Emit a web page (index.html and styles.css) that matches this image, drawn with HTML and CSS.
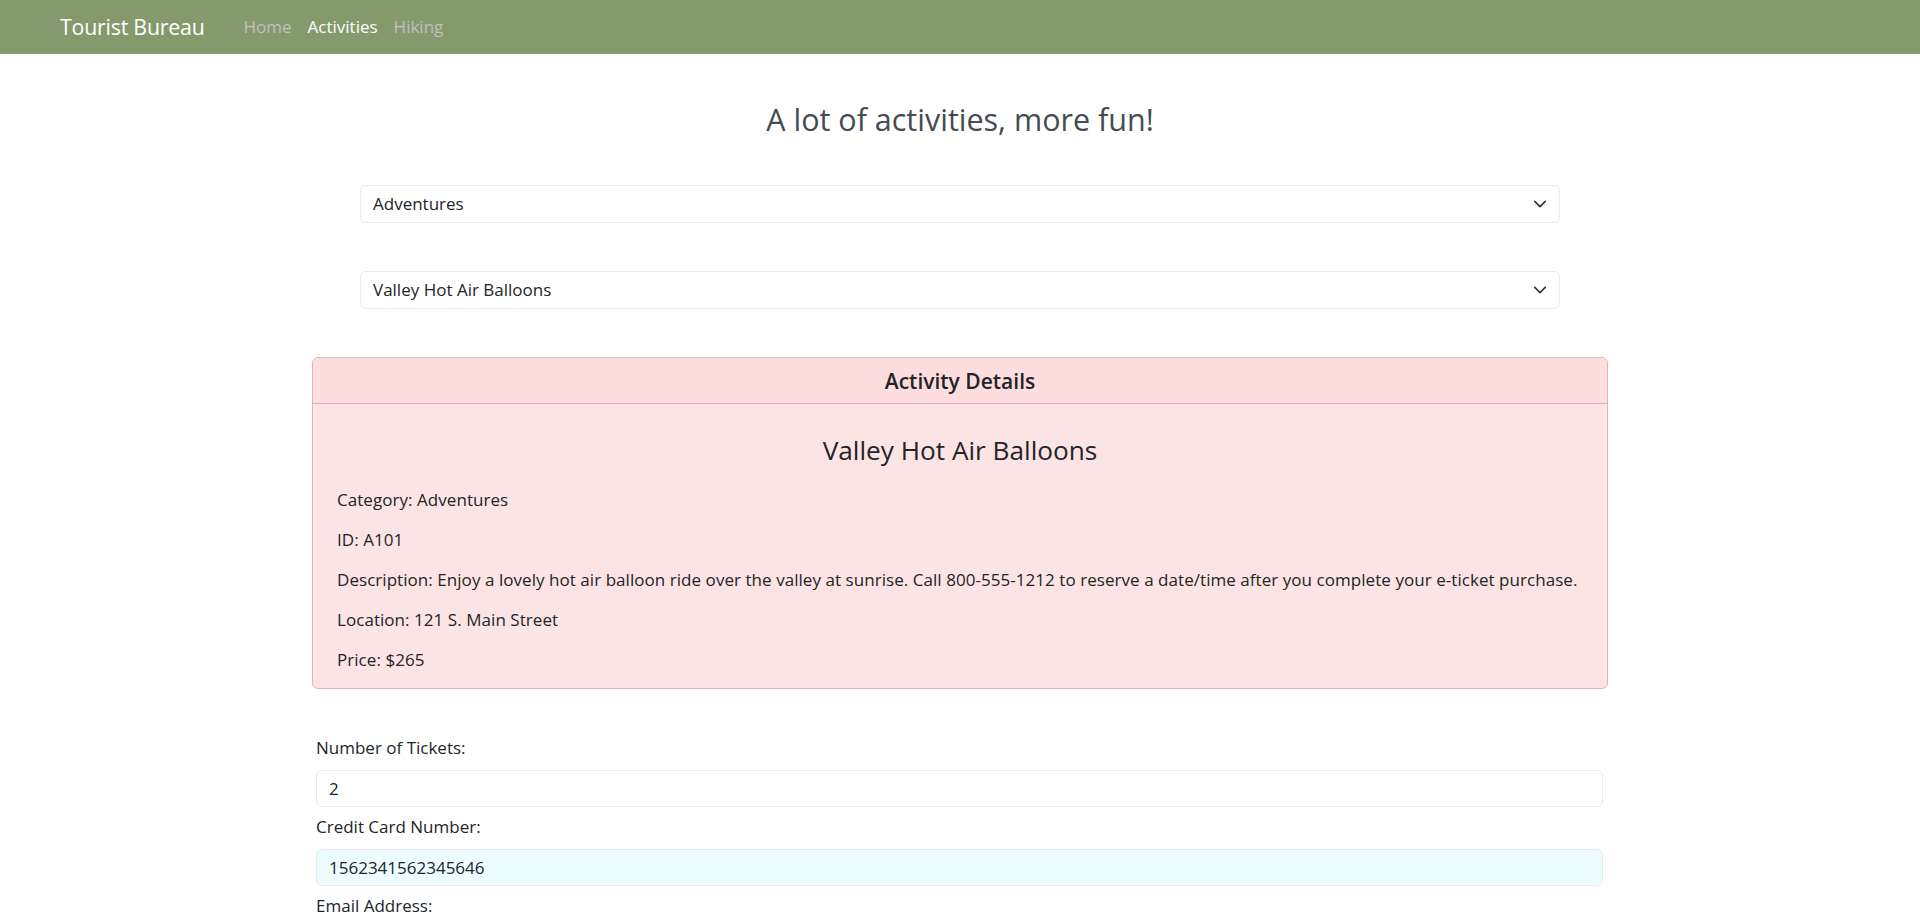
FILE: index.html
```html
<!DOCTYPE html>
<html lang="en">
<head>
<meta charset="utf-8">
<title>Tourist Bureau - Activities</title>
<link rel="stylesheet" href="styles.css">
</head>
<body>
<nav class="navbar">
  <a class="brand" href="#">Tourist Bureau</a>
  <ul class="nav-links">
    <li><a class="nav-link" href="#">Home</a></li>
    <li><a class="nav-link active" href="#">Activities</a></li>
    <li><a class="nav-link" href="#">Hiking</a></li>
  </ul>
</nav>
<main class="container">
  <h2 class="page-title">A lot of activities, more fun!</h2>
  <div class="select-wrap">
    <div class="select-box">
      <span class="select-text">Adventures</span>
      <svg class="chevron" width="16" height="16" viewBox="0 0 16 16"><path d="M2 5l6 6 6-6" fill="none" stroke="#343a40" stroke-width="2" stroke-linecap="round" stroke-linejoin="round"/></svg>
    </div>
  </div>
  <div class="select-wrap">
    <div class="select-box">
      <span class="select-text">Valley Hot Air Balloons</span>
      <svg class="chevron" width="16" height="16" viewBox="0 0 16 16"><path d="M2 5l6 6 6-6" fill="none" stroke="#343a40" stroke-width="2" stroke-linecap="round" stroke-linejoin="round"/></svg>
    </div>
  </div>
  <section class="card">
    <div class="card-header">Activity Details</div>
    <div class="card-body">
      <h3 class="card-title">Valley Hot Air Balloons</h3>
      <p>Category: Adventures</p>
      <p>ID: A101</p>
      <p>Description: Enjoy a lovely hot air balloon ride over the valley at sunrise. Call 800-555-1212 to reserve a date/time after you complete your e-ticket purchase.</p>
      <p>Location: 121 S. Main Street</p>
      <p>Price: $265</p>
    </div>
  </section>
  <form class="purchase-form">
    <label class="form-label">Number of Tickets:</label>
    <div class="form-input">2</div>
    <label class="form-label">Credit Card Number:</label>
    <div class="form-input filled">1562341562345646</div>
    <label class="form-label">Email Address:</label>
    <div class="form-input"></div>
  </form>
</main>
</body>
</html>
```
FILE: styles.css
```css
* { box-sizing: border-box; }
html, body { margin: 0; padding: 0; }
body {
  font-family: "Open Sans", "DejaVu Sans", sans-serif;
  font-size: 17px;
  line-height: 24px;
  color: #212529;
  background: #ffffff;
  overflow: hidden;
}
.navbar {
  height: 54px;
  background: #849a6c;
  display: flex;
  align-items: center;
  padding-left: 60px;
}
.brand {
  color: #ffffff;
  font-size: 21.3px;
  text-decoration: none;
  margin-right: 31px;
  letter-spacing: -0.2px;
}
.nav-links {
  list-style: none;
  margin: 0;
  padding: 0;
  display: flex;
}
.nav-link {
  display: block;
  padding: 0 8px;
  color: #c6bec2;
  text-decoration: none;
  font-size: 17px;
}
.nav-link.active { color: #ffffff; }
.container {
  width: 1296px;
  margin: 0 auto;
}
.page-title {
  margin: 47px 0 0;
  text-align: center;
  font-weight: 400;
  font-size: 30.5px;
  line-height: 36px;
  color: #454b52;
}
.select-wrap {
  margin: 48px 48px 0;
}
.select-box {
  height: 38px;
  border: 1px solid #e9eaeb;
  border-radius: 6px;
  display: flex;
  align-items: center;
  justify-content: space-between;
  padding: 0 12px;
  font-size: 17px;
}
.chevron { width: 14px; height: 14px; }
.card {
  margin-top: 48px;
  border: 1px solid #dcb6b9;
  border-radius: 6px;
  background: #fde4e4;
  overflow: hidden;
}
.card-header {
  height: 46px;
  background: #fddddd;
  border-bottom: 1px solid #d9b4b6;
  display: flex;
  align-items: center;
  justify-content: center;
  font-weight: 600;
  font-size: 21px;
}
.card-body {
  padding: 24px 24px 0;
}
.card-title {
  margin: 8px 0 23px;
  text-align: center;
  font-weight: 400;
  font-size: 26.2px;
  line-height: 29px;
}
.card-body p {
  margin: 0 0 16px;
  letter-spacing: 0.05px;
}
.purchase-form {
  margin: 47px 5px 0 4px;
  display: flex;
  flex-direction: column;
}
.form-label {
  margin-bottom: 10px;
}
.form-input {
  height: 37px;
  border: 1px solid #e9eaeb;
  border-radius: 6px;
  padding: 0 12px;
  display: flex;
  align-items: center;
  margin-bottom: 8px;
}
.form-input.filled {
  background: #edfdff;
}
```
